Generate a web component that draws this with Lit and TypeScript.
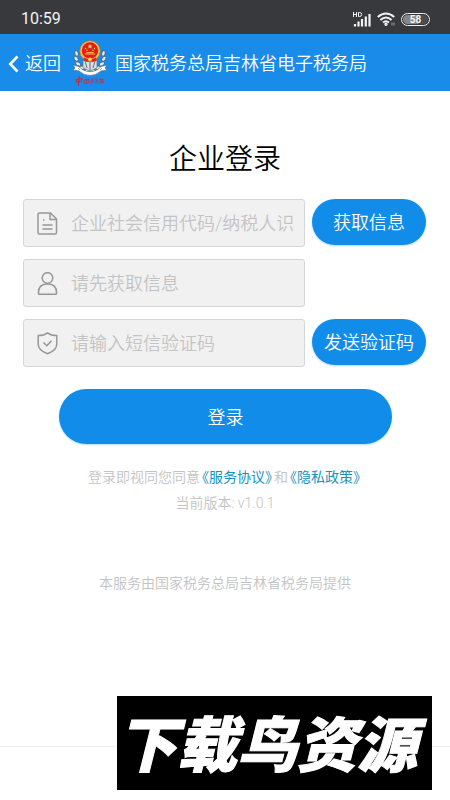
import { LitElement, html, css, svg } from "lit";
import { customElement } from "lit/decorators.js";

const leaves = [0, 1, 2, 3, 4].map((i) => {
  const r = 100 + i * 24;
  const a = (r * Math.PI) / 180;
  return { x: 18 + 14 * Math.cos(a), y: 17 + 13 * Math.sin(a), r };
});

const emblem = html`<svg class="emblem" viewBox="0 0 36 46" role="img" aria-label="中国税务">
  <g fill="#e8eef2" stroke="#47535c" stroke-width=".7">
    ${leaves.map(
      (l) => svg`<ellipse cx=${l.x} cy=${l.y} rx="2.8" ry="1.7" transform=${`rotate(${l.r + 60} ${l.x} ${l.y})`} />
      <ellipse cx=${36 - l.x} cy=${l.y} rx="2.8" ry="1.7" transform=${`rotate(${-l.r - 60} ${36 - l.x} ${l.y})`} />`
    )}
  </g>
  <path d="M11 19h14v9l-7 3-7-3z" fill="#d9dfe3" stroke="#59636b" stroke-width=".6" />
  <path d="M13 21l2 7M23 21l-2 7M18 22v8" stroke="#66717a" stroke-width="1" />
  <circle cx="18" cy="11" r="10.3" fill="#f1bd55" stroke="#a86f2c" stroke-width=".6" />
  <circle cx="18" cy="10.5" r="8.2" fill="#e51d16" />
  <path d="M18 4l.7 1.6 1.7.1-1.3 1.1.4 1.7-1.5-.9-1.5.9.4-1.7-1.3-1.1 1.7-.1z" fill="#ffe06a" />
  <g fill="#ffe06a"><circle cx="13.5" cy="8.5" r=".7" /><circle cx="15" cy="10.2" r=".7" /><circle cx="21" cy="10.2" r=".7" /><circle cx="22.5" cy="8.5" r=".7" /></g>
  <path d="M14 13l1-1h6l1 1zM13 13.6h10v.9H13z" fill="#f8c84d" />
  <path d="M12 17.500q6 3 12 0l1 3q-7 3-14 0z" fill="#d92a19" />
  <circle cx="18" cy="19.5" r="2" fill="#f5c75c" />
  <path d="M1 25l6 1.500q4 5 11 5t11-5l6-1.500-2 3 2 2-6 1q-5 4.500-11 4.500T7 31l-6-1 2-2z" fill="#fff" stroke="#5a7083" stroke-width=".7" />
  <path d="M6 28l2 2M30 28l-2 2" stroke="#8496a5" stroke-width=".7" />
  <g fill="none" stroke="#c52e47" stroke-linecap="round">
    <path d="M4 39.500l6-1-.8 2.800-4.400.6z" stroke-width="1.200" />
    <path d="M7.200 37l-.7 8" stroke-width="1.500" />
    <path d="M12.500 40l4.500-1-.5 4-4 .5zM15 40l-.6 2.500" stroke-width=".9" />
    <path d="M19 40l3-1.300M20.700 39l-1 5M18.600 42l3-1M23.500 39.500l2-.6-.4 2-1.600.3M23 43l1.300-1.600M25.200 41.200l-.3 2h1.200" stroke-width=".8" />
    <path d="M28.500 38.500l-1.200 1.800M28.500 39.500h3l-3.500 2.500M28.500 40l3.500 1.500M28.500 42.300l2.800-.4-.8 1.800M30 41.500l-1.800 2.200" stroke-width=".8" />
  </g>
</svg>`;

const docIcon = svg`<path d="M2.500 1h11L19.500 7v13.500a1.500 1.500 0 0 1-1.500 1.500H2.500A1.500 1.500 0 0 1 1 20.500v-18A1.500 1.500 0 0 1 2.500 1z" /><path d="M13 1v6.500h6.500M5.500 13h10M5.500 17h10M6 8h1.500" />`;
const userIcon = svg`<circle cx="10.500" cy="6" r="5.300" /><path d="M1.500 21.500q-.5-9.500 9-9.500t9 9.500q0 .8-.8.800H2.300q-.8 0-.8-.8z" />`;
const shieldIcon = svg`<path d="M10.500.8q3.500 2.700 9.300 2.700v8.500q0 6.500-9.300 9.700Q1.200 18.500 1.200 12V3.500Q7 3.500 10.500.8z" /><path d="M6.500 10.500l3.300 3.300 4.700-5" />`;

@customElement("app-root")
export class AppRoot extends LitElement {
  static styles = css`
    :host {
      display: flex;
      flex-direction: column;
      position: relative;
      min-height: 100vh;
      background: #fff;
      font-family: Roboto, "Noto Sans CJK SC", sans-serif;
      font-weight: 350;
      font-size: 18px;
      line-height: 24px;
      color: #000;
    }
    * { box-sizing: border-box; }
    svg { display: block; flex: none; }
    .status {
      display: flex;
      align-items: center;
      height: 34px;
      padding: 4px 20px 0 21px;
      background: #38393d;
      color: #f3f3f4;
    }
    .time { flex: 1; font-size: 16px; font-weight: 400; }
    .indicators { display: flex; align-items: center; gap: 6px; }
    .battery {
      width: 29px;
      height: 13px;
      border: 1px solid #eee;
      border-radius: 7px;
      background: linear-gradient(90deg, #85868a 60%, #4b4c50 60%);
      background-clip: content-box;
      padding: 1px;
      font-size: 10px;
      font-weight: 700;
      line-height: 9px;
      text-align: center;
    }
    .bar {
      display: flex;
      align-items: center;
      height: 57px;
      padding: 3px 8px 0;
      background: #198ce9;
      color: #fff;
    }
    .back {
      display: flex;
      align-items: center;
      gap: 6px;
      color: inherit;
      text-decoration: none;
    }
    .emblem { width: 36px; height: 46px; margin: 0 7px 2px 11px; }
    .title { margin: 0; font-size: 18px; font-weight: inherit; }
    .heading {
      margin: 51px 0 21px;
      font-size: 28px;
      font-weight: inherit;
      line-height: 36px;
      text-align: center;
    }
    .form {
      display: grid;
      grid-template-columns: minmax(0, 1fr) 114px;
      gap: 12px 7px;
      padding: 0 24px 0 23px;
    }
    .field {
      display: flex;
      align-items: center;
      gap: 13px;
      grid-column: 1;
      height: 48px;
      padding: 0 10px 0 13px;
      border: 1px solid #d6d6d6;
      border-radius: 3px;
      background: #f1f1f1;
    }
    .icon { fill: none; stroke: #979797; stroke-width: 1.5; stroke-linejoin: round; }
    .input {
      flex: 1;
      min-width: 0;
      height: 30px;
      padding: 0;
      border: 0;
      outline: 0;
      background: none;
      font: inherit;
    }
    .input::placeholder { color: #c4c4c4; opacity: 1; }
    .button {
      height: 46px;
      padding: 2px 0 0;
      border: 0;
      border-radius: 28px;
      background: #118de9;
      box-shadow: 0 1px 2px #118de955;
      color: #fff;
      font: inherit;
      white-space: nowrap;
    }
    .submit {
      grid-column: 1 / -1;
      height: 55px;
      margin: 10px 34px 0 36px;
    }
    .note {
      margin: 0;
      font-size: 14px;
      line-height: 26px;
      text-align: center;
      color: #c3c3c3;
    }
    .terms { margin-top: 20px; }
    .provider { margin-top: 54px; }
    .link {
      margin: 0 2px;
      color: #1594bd;
      font-weight: 400;
      text-decoration: none;
      font-feature-settings: "halt";
    }
    .footer {
      height: 54px;
      margin-top: auto;
      border-top: 1px solid #f0f0f0;
    }
    .watermark {
      position: absolute;
      right: 18px;
      bottom: 10px;
      width: 315px;
      height: 94px;
      padding-right: 16px;
      background: #000;
      color: #fff;
      font-family: "Noto Sans CJK SC", sans-serif;
      font-size: 60px;
      font-weight: 900;
      font-style: italic;
      line-height: 90px;
      text-align: center;
      white-space: nowrap;
      -webkit-text-stroke: 1px #fff;
    }
  `;

  render() {
    return html`
      <div class="status">
        <span class="time">10:59</span>
        <div class="indicators">
          <svg width="18" height="15" viewBox="0 0 18 15" fill="none" stroke="#f3f3f4">
            <path d="M.5 0v5M3.500 0v5M.5 2.500h3M5.500.5h1.200q2 0 2 2t-2 2H5.500z" stroke-width="1" />
            <path d="M2 14.500v-2.500M5.500 14.500V9.500M9 14.500V7M12.800 14.500V4.500M16.500 14.500V2" stroke-width="2.200" />
          </svg>
          <svg width="18" height="14" viewBox="0 0 18 14" fill="none" stroke="#f3f3f4" stroke-width="2">
            <path d="M.8 5Q9-2 17.200 5M3.400 8Q9 3 14.600 8M6 10.500q3-2.500 6 0" />
            <circle cx="9" cy="12.300" r=".7" />
            <path d="M15 10.500v3M17 10.500v3" stroke="#9b9ca0" stroke-width="1" />
          </svg>
          <span class="battery">58</span>
        </div>
      </div>
      <header class="bar">
        <a class="back" href="#">
          <svg width="11" height="18" viewBox="0 0 11 18" fill="none" stroke="#fff" stroke-width="2.600">
            <path d="M9.500 1.500L2.200 9l7.300 7.500" />
          </svg>
          返回
        </a>
        ${emblem}
        <h1 class="title">国家税务总局吉林省电子税务局</h1>
      </header>
      <main>
        <h2 class="heading">企业登录</h2>
        <form class="form" @submit=${(e: Event) => e.preventDefault()}>
          ${this.field("企业社会信用代码/纳税人识别号", docIcon)}
          <button class="button" type="button">获取信息</button>
          ${this.field("请先获取信息", userIcon)}
          ${this.field("请输入短信验证码", shieldIcon)}
          <button class="button" type="button">发送验证码</button>
          <button class="button submit" type="submit">登录</button>
        </form>
        <p class="note terms">登录即视同您同意<a class="link" href="#">《服务协议》</a>和<a class="link" href="#">《隐私政策》</a></p>
        <p class="note">当前版本: v1.0.1</p>
        <p class="note provider">本服务由国家税务总局吉林省税务局提供</p>
      </main>
      <footer class="footer"></footer>
      <div class="watermark">下载鸟资源</div>
    `;
  }

  private field(label: string, icon: unknown) {
    return html`<label class="field">
      <svg class="icon" width="21" height="23" viewBox="0 0 21 23">${icon}</svg>
      <input class="input" type="text" placeholder=${label} aria-label=${label} />
    </label>`;
  }
}
